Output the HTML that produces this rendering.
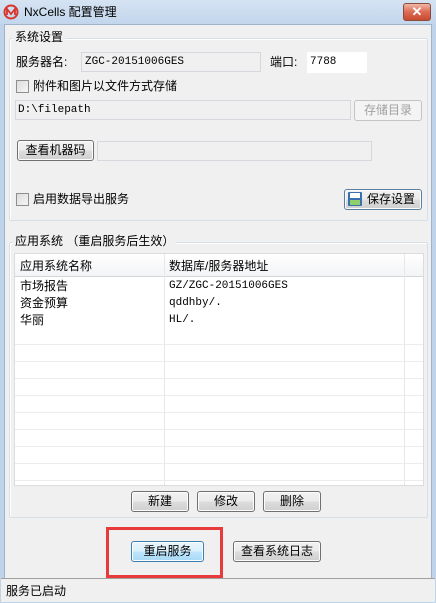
<!DOCTYPE html>
<html><head><meta charset="utf-8"><style>
*{box-sizing:border-box;margin:0;padding:0}
body{width:436px;height:603px;overflow:hidden;background:#bfd3ea;font-family:"Liberation Sans","Noto Sans CJK SC","WenQuanYi Zen Hei",sans-serif;font-size:12px;color:#000;position:relative}
.a{position:absolute}
.win{left:4px;top:24px;width:428px;height:575px;background:#f0f0f0;border:1px solid #9fb3cc}
.title{left:0;top:0;width:436px;height:24px;background:linear-gradient(#d5e3f3,#c3d6ec)}
.grp{border:1px solid #d5dfe5;border-radius:2px;box-shadow:inset 1px 1px 0 #fff}
.leg{background:#f0f0f0;padding:0 2px;line-height:14px}
.tb{background:#fff;border:1px solid #c8ccd2;border-top-color:#abadb3}
.tbd{background:#f0f0f0;border:1px solid #d5d8dc}
.mono{font-family:"Liberation Mono","Noto Sans CJK SC",monospace;font-size:11px}
.btn{border:1px solid #707070;border-radius:3px;background:linear-gradient(#f2f2f2 0%,#ebebeb 50%,#dddddd 51%,#cfcfcf 100%);text-align:center;line-height:18px;box-shadow:inset 0 0 0 1px #fcfcfc}
.cb{width:13px;height:13px;border:1px solid #8e8f8f;background:linear-gradient(135deg,#dcdcdc,#f6f6f6)}
.t{line-height:14px;white-space:nowrap}
</style></head><body>
<div class="a title"></div>
<svg class="a" style="left:3px;top:4px" width="16" height="16" viewBox="0 0 16 16"><circle cx="8" cy="8" r="6.5" fill="none" stroke="#d8352a" stroke-width="2"/><path d="M4 11V5l4 5 4-5v6" fill="none" stroke="#d8352a" stroke-width="1.8"/></svg>
<div class="a t" style="left:24px;top:5px;font-size:12px">NxCells 配置管理</div>
<div class="a" style="left:403px;top:3px;width:28px;height:18px;border:1px solid #8a4a3e;border-radius:3px;background:linear-gradient(#f0b8a8,#dc6a52 50%,#c84a30);color:#fff;text-align:center;font-weight:bold;line-height:15px;font-size:13px">✕</div>
<div class="a win"></div>

<div class="a grp" style="left:9px;top:38px;width:419px;height:183px"></div>
<div class="a leg" style="left:13px;top:30px">系统设置</div>
<div class="a t" style="left:16px;top:55px">服务器名:</div>
<div class="a tbd mono" style="left:81px;top:52px;width:180px;height:20px;padding:3px 0 0 3px">ZGC-20151006GES</div>
<div class="a t" style="left:270px;top:55px">端口:</div>
<div class="a tb mono" style="left:307px;top:52px;width:60px;height:21px;padding:3px 0 0 2px;border-color:#fff">7788</div>
<div class="a cb" style="left:16px;top:80px"></div>
<div class="a t" style="left:33px;top:79px">附件和图片以文件方式存储</div>
<div class="a tbd mono" style="left:15px;top:100px;width:336px;height:20px;padding:3px 0 0 2px">D:\filepath</div>
<div class="a" style="left:354px;top:100px;width:68px;height:21px;border:1px solid #c4c4c4;border-radius:3px;background:#f4f4f4;color:#a0a0a0;text-align:center;line-height:19px">存储目录</div>
<div class="a btn" style="left:17px;top:140px;width:77px;height:21px">查看机器码</div>
<div class="a tbd" style="left:97px;top:141px;width:275px;height:20px"></div>
<div class="a cb" style="left:16px;top:193px"></div>
<div class="a t" style="left:33px;top:192px">启用数据导出服务</div>
<div class="a btn" style="left:344px;top:189px;width:78px;height:21px;padding-left:16px;border-color:#5a7fa0">保存设置</div>
<svg class="a" style="left:347px;top:191px" width="16" height="16" viewBox="0 0 16 16"><rect x="1" y="1" width="14" height="14" rx="1" fill="#3a6fb0"/><rect x="3" y="2" width="10" height="5" fill="#fff"/><rect x="3" y="9" width="10" height="5" fill="#8fd06a"/></svg>

<div class="a grp" style="left:9px;top:242px;width:419px;height:276px"></div>
<div class="a leg" style="left:13px;top:234px">应用系统 （重启服务后生效）</div>
<div class="a" style="left:14px;top:253px;width:410px;height:233px;background:#fff;border:1px solid #dcdcdc"></div>
<div class="a" style="left:15px;top:254px;width:408px;height:23px;background:linear-gradient(#fff,#f3f4f6);border-bottom:1px solid #d5d5d5"></div>
<div class="a" style="left:164px;top:254px;width:1px;height:231px;background:#e8e8e8"></div>
<div class="a" style="left:404px;top:254px;width:1px;height:231px;background:#e8e8e8"></div>
<div class="a" style="left:15px;top:328px;width:408px;height:157px;background:repeating-linear-gradient(transparent 0 16px,#ececec 16px 17px)"></div>
<div class="a t" style="left:20px;top:259px">应用系统名称</div>
<div class="a t" style="left:169px;top:259px">数据库/服务器地址</div>
<div class="a t" style="left:20px;top:279px">市场报告</div>
<div class="a t mono" style="left:169px;top:279px">GZ/ZGC-20151006GES</div>
<div class="a t" style="left:20px;top:296px">资金预算</div>
<div class="a t mono" style="left:169px;top:296px">qddhby/.</div>
<div class="a t" style="left:20px;top:313px">华丽</div>
<div class="a t mono" style="left:169px;top:313px">HL/.</div>

<div class="a btn" style="left:131px;top:491px;width:58px;height:21px">新建</div>
<div class="a btn" style="left:197px;top:491px;width:58px;height:21px">修改</div>
<div class="a btn" style="left:263px;top:491px;width:58px;height:21px">删除</div>

<div class="a" style="left:106px;top:527px;width:117px;height:51px;border:3px solid #e8393b"></div>
<div class="a btn" style="left:131px;top:541px;width:73px;height:21px;border-color:#3c7fb1;background:linear-gradient(#eaf6fd,#d9f0fc 50%,#bee6fd 51%,#a7d9f5)">重启服务</div>
<div class="a btn" style="left:233px;top:541px;width:88px;height:21px">查看系统日志</div>

<div class="a" style="left:1px;top:578px;width:434px;height:24px;background:#f0f0f0;border-top:1px solid #a0a0a0"></div>
<div class="a t" style="left:6px;top:584px">服务已启动</div>
</body></html>
